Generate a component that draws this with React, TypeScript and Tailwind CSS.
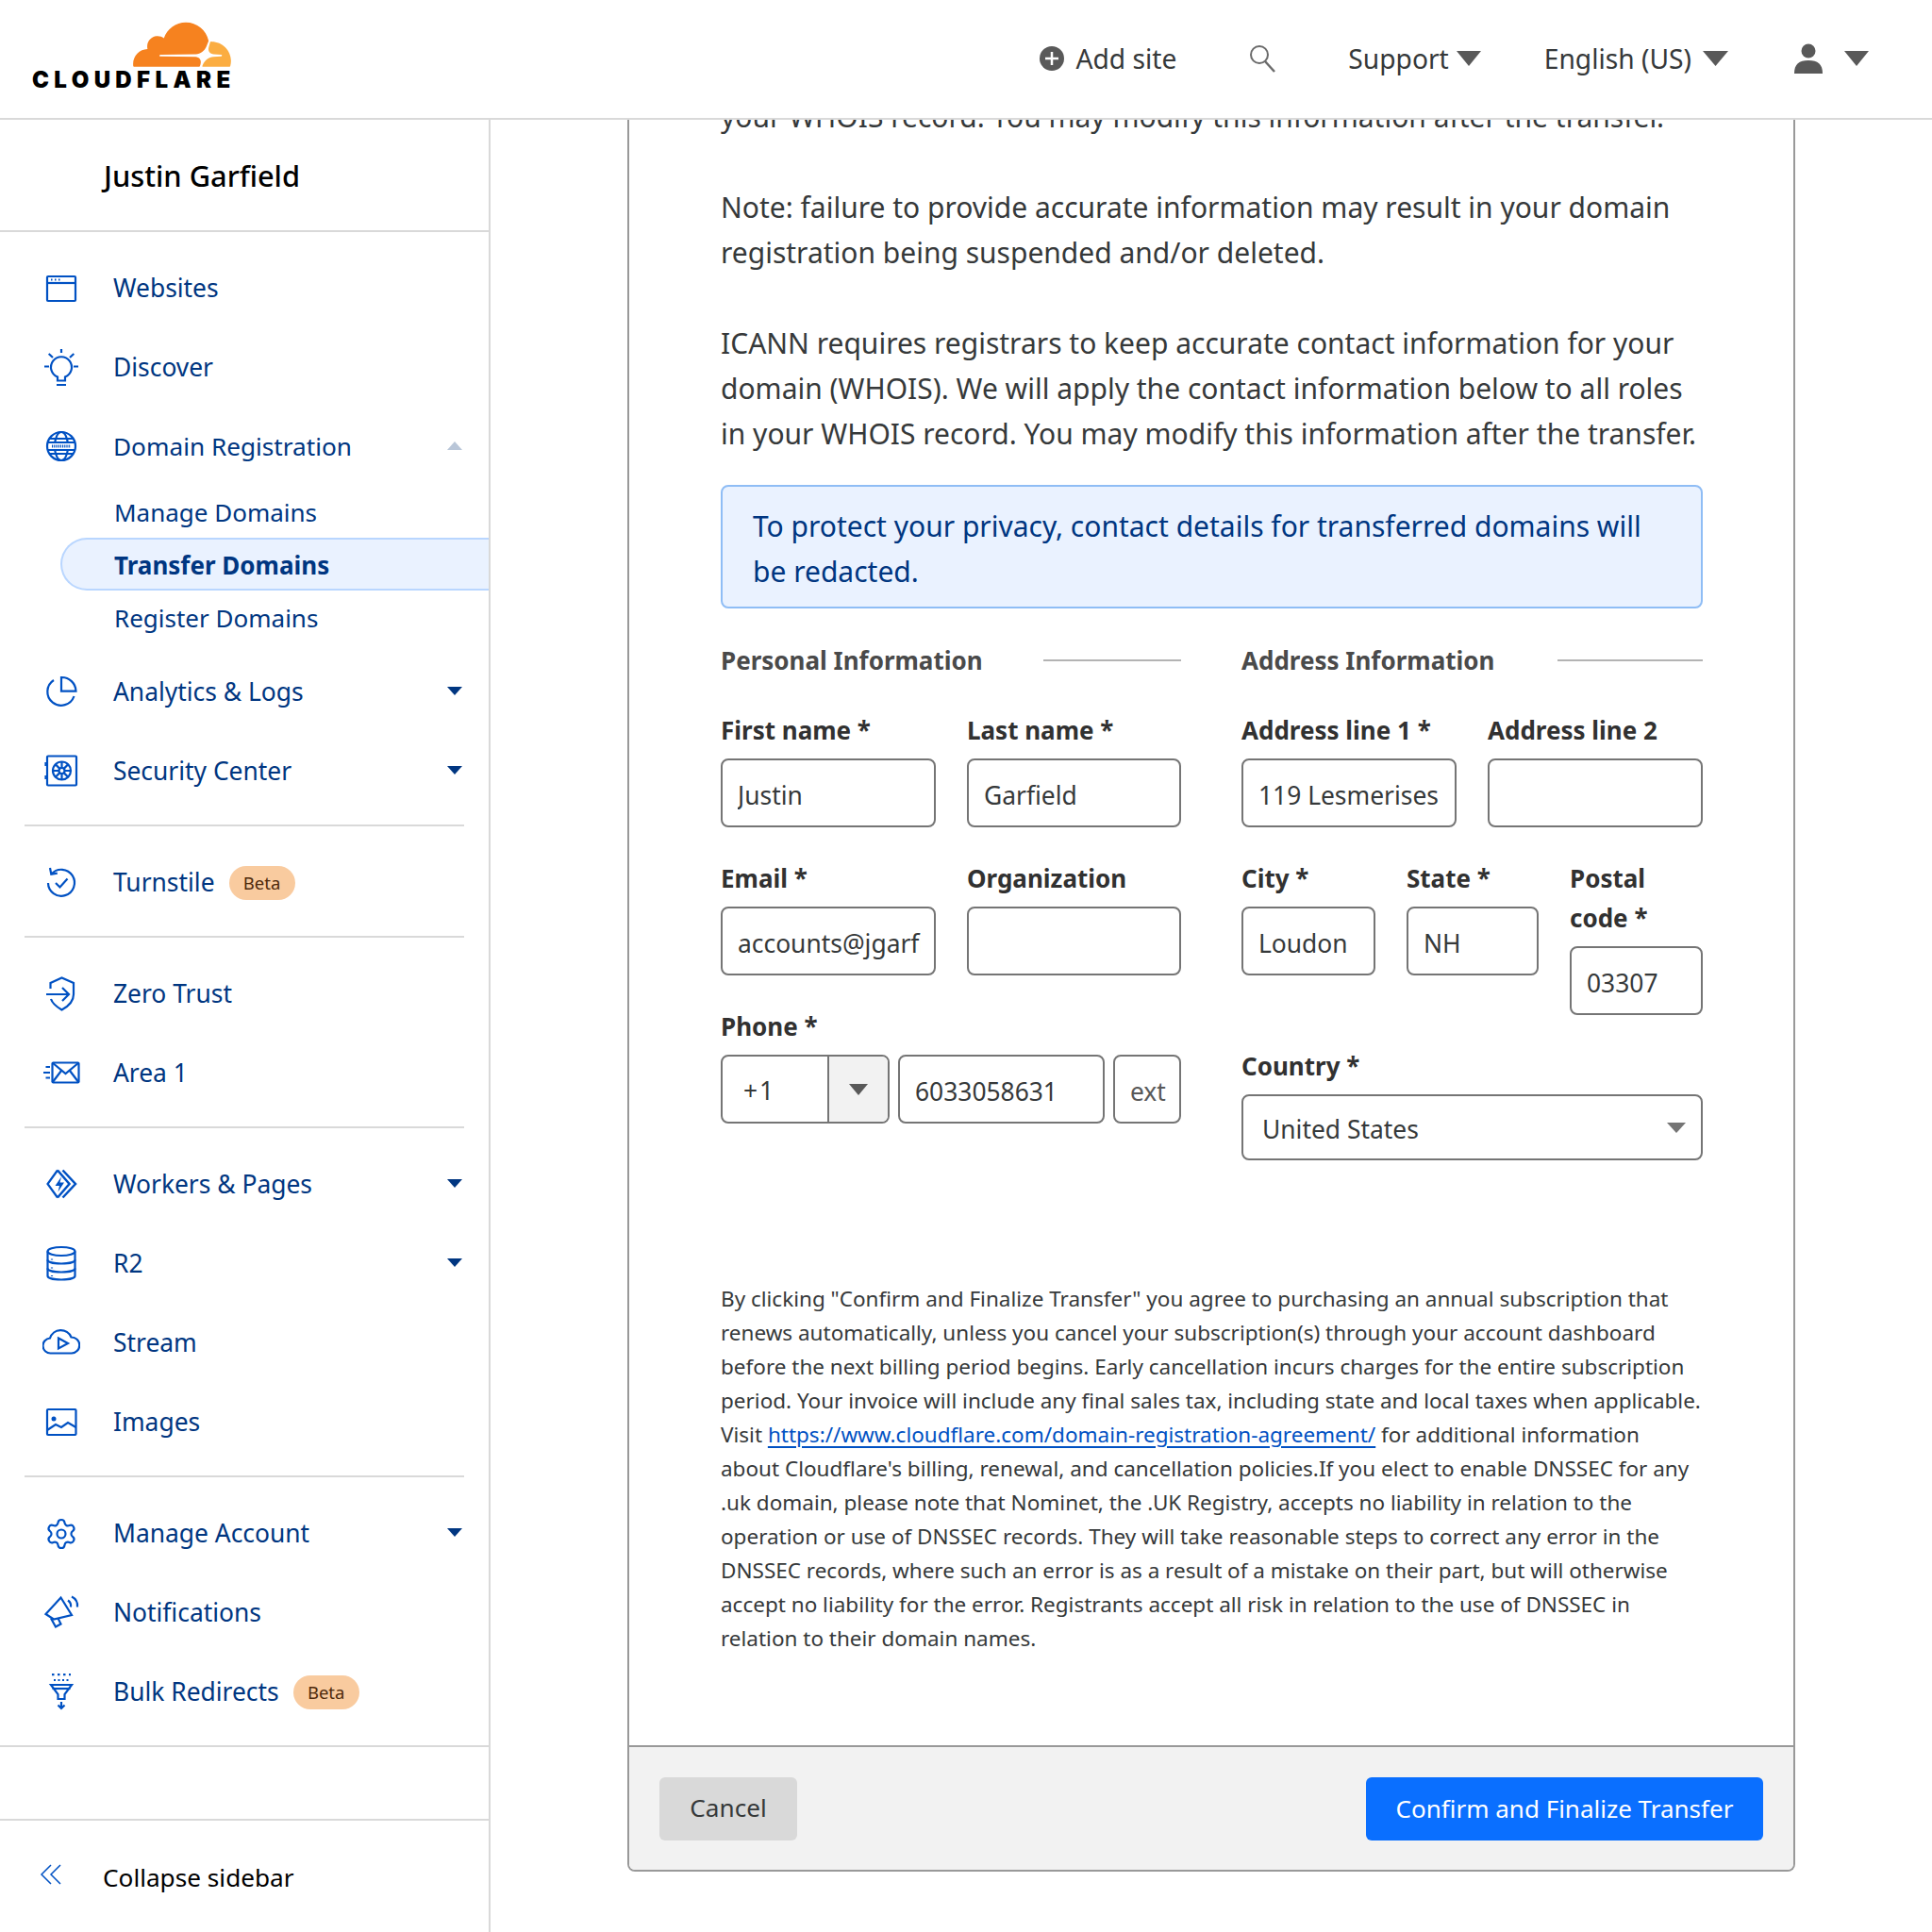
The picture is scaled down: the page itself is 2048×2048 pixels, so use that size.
import { ReactNode } from 'react';
import { Settings } from 'lucide-react';

// Sidebar icons, drawn in a 40x40 box
const Ico = ({ children }: { children: ReactNode }) => (
  <svg viewBox="0 0 40 40" fill="none" stroke="#0051c3" strokeWidth={2.2} className="w-10 h-10 shrink-0">
    {children}
  </svg>
);

const icons: Record<string, ReactNode> = {
  websites: (
    <Ico>
      <rect x="5" y="7" width="30" height="26" rx="1" />
      <path d="M5 14h30" />
      <path d="M9 10.5h1.5M13 10.5h1.5M17 10.5h1.5" />
    </Ico>
  ),
  discover: (
    <Ico>
      <path d="M16 33.5v-4a11 11 0 1 1 8 0v4z" />
      <path d="M15 38h10M20 0v4M6.7 5l4.3 4M33.3 5L29 9M2 18.5h5M33 18.5h5" />
    </Ico>
  ),
  domain: (
    <Ico>
      <circle cx="20" cy="19" r="15" />
      <ellipse cx="20" cy="19" rx="7" ry="15" />
      <path d="M7 11h26M7 27h26M5 15h30M5 23h30" />
      <rect x="9" y="16" width="22" height="6" fill="#fff" stroke="none" />
      <path d="M10 19h20" strokeWidth={3} strokeDasharray="1.2 1" />
    </Ico>
  ),
  analytics: (
    <Ico>
      <path d="M12 7A14.5 14.5 0 1 0 33.5 24" />
      <path d="M20 4a15 15 0 0 1 15.5 14.7H20z" />
    </Ico>
  ),
  security: (
    <Ico>
      <rect x="5" y="3.5" width="31" height="31" rx="1" />
      <path d="M3.5 10v4M3.5 24v4" />
      <circle cx="20.5" cy="19" r="9.5" />
      <circle cx="20.5" cy="19" r="3" />
      <path d="M20.5 9.5V16M20.5 22v6.5M11 19h6.5M23.5 19H30M13.8 12.3l4.6 4.6M22.6 21.1l4.6 4.6M27.2 12.3l-4.6 4.6M18.4 21.1l-4.6 4.6" />
    </Ico>
  ),
  turnstile: (
    <Ico>
      <path d="M9.5 10.5A14 14 0 1 1 6 20" />
      <path d="M8 4l1.3 6.8 6.5-1.2" />
      <path d="M14 20l4.5 4.5 8-9" />
    </Ico>
  ),
  zero: (
    <Ico>
      <path d="M8.5 14V8l12-5.5L33 8v12c0 8-6 13-12.5 16.500C14.500 33 10.500 29.500 9 25" />
      <path d="M4 20h24M21 13l7 7-7 7" />
    </Ico>
  ),
  area: (
    <Ico>
      <rect x="10.500" y="8.500" width="28" height="21" rx="1" />
      <path d="M10.500 8.500l14 11.500 14-11.500M10.500 29.500L20 17M38.500 29.500L29 17" />
      <path d="M3.500 13H8M1 19h7M3.500 24.500H8" />
    </Ico>
  ),
  workers: (
    <Ico>
      <path d="M16 4.500L5.500 19 16 33.500" />
      <path d="M16 4.500L28.500 19 16 33.500M21.500 4.500L35 19 21.500 33.500" strokeWidth={2.500} />
      <path d="M20 11.500L13.500 21h4.500l-1.500 6.500L23 17.500h-4.500z" fill="#0051c3" stroke="none" />
    </Ico>
  ),
  r2: (
    <Ico>
      <ellipse cx="20" cy="6.500" rx="14.500" ry="4.500" />
      <path d="M5.500 6.500v26c0 2.500 6.500 4 14.500 4s14.500-1.500 14.500-4v-26" />
      <path d="M5.500 15.500c0 2.500 6.500 4 14.500 4s14.500-1.500 14.500-4M5.500 24.500c0 2.500 6.500 4 14.500 4s14.500-1.500 14.500-4" />
      <path d="M10 14.500v1M10 23.500v1M10 32v1" />
    </Ico>
  ),
  stream: (
    <Ico>
      <path d="M9 30.500a8 8 0 0 1-1-16 12 12 0 0 1 22.500-1A8.500 8.500 0 0 1 31 30.500z" />
      <path d="M17 14.500L27 20l-10 5.500z" />
    </Ico>
  ),
  images: (
    <Ico>
      <rect x="5" y="6" width="30.500" height="27" rx="1" />
      <circle cx="12" cy="16" r="2.500" fill="#0051c3" stroke="none" />
      <path d="M5 28l9-6 6 3 7-5 8.500 5" />
    </Ico>
  ),
  account: (
    <span className="w-10 h-10 shrink-0 flex items-center justify-center">
      <Settings size={36} color="#0051c3" strokeWidth={1.45} />
    </span>
  ),
  notifications: (
    <Ico>
      <path d="M19.500 3.500L31 22l-19 4.500L3.500 21z" />
      <path d="M9 25.500l5 9 5.500-3-3-6" />
      <path d="M27 6.500a7 7 0 0 1 3 7M31 2.500a11 11 0 0 1 6 11" />
    </Ico>
  ),
  bulk: (
    <Ico>
      <path d="M9 12h22l-7.500 10v5h-7v-5z" />
      <path d="M10.500 16h19" />
      <path d="M20 30v7M16.500 33.500L20 37l3.500-3.500" />
      <path d="M10 1h20" strokeWidth={2.500} strokeDasharray="2.500 3.500" />
      <path d="M12 7h16" strokeWidth={2} strokeDasharray="2 2.500" />
    </Ico>
  ),
};

function Caret({ up, light }: { up?: boolean; light?: boolean }) {
  return (
    <svg viewBox="0 0 16 9" className="block w-4 h-[9px] -mt-1">
      <path d={up ? 'M0 9L8 0l8 9z' : 'M0 0h16L8 9z'} fill={light ? '#b9c6d8' : '#003681'} />
    </svg>
  );
}

function HeadCaret({ wide }: { wide?: boolean }) {
  return (
    <svg viewBox="0 0 26 16" preserveAspectRatio="none" className={`block h-4 ${wide ? 'w-[27px]' : 'w-[26px]'}`}>
      <path d="M0 0h26L13 16z" fill="#595959" />
    </svg>
  );
}

function Beta() {
  return (
    <span className="ml-[15px] w-[70px] h-9 rounded-full bg-[#f9cb9f] text-[#4f2a0c] text-[18.500px] flex items-center justify-center">
      Beta
    </span>
  );
}

function NavRow({ icon, label, caret, beta }: { icon: string; label: string; caret?: boolean; beta?: boolean }) {
  return (
    <div className="h-[84px] pt-1 flex items-center pl-[45px] pr-7 text-[#003681] text-[26.400px]">
      {icons[icon]}
      <span className="ml-[35px] whitespace-nowrap">{label}</span>
      {beta && <Beta />}
      {caret && (
        <span className="ml-auto">
          <Caret />
        </span>
      )}
    </div>
  );
}

function Divider() {
  return <div className="ml-[26px] mr-[26px] h-0.5 bg-[#d9d9d9] my-4" />;
}

function Sidebar() {
  return (
    <aside className="w-[520px] shrink-0 border-r-2 border-[#d9d9d9] flex flex-col">
      <div className="h-[119px] pt-0.5 shrink-0 border-b-2 border-[#d9d9d9] pl-[110px] flex items-center text-[30.800px] font-medium text-black">
        Justin Garfield
      </div>
      <nav className="pt-4">
        <NavRow icon="websites" label="Websites" />
        <NavRow icon="discover" label="Discover" />
        <div className="h-[84px] pt-1 flex items-center pl-[45px] pr-7 text-[#003681] text-[26.200px]">
          {icons.domain}
          <span className="ml-[35px]">Domain Registration</span>
          <span className="ml-auto">
            <Caret up light />
          </span>
        </div>
        <div className="pb-2 text-[26px] text-[#003681]">
          <div className="h-14 pt-0.5 pl-[121px] flex items-center">Manage Domains</div>
          <div className="h-14 pt-0.5 ml-[64px] pl-[55px] flex items-center font-bold bg-[#eaf2ff] border-2 border-r-0 border-[#b9d6ff] rounded-l-full">
            Transfer Domains
          </div>
          <div className="h-14 pt-0.5 pl-[121px] flex items-center">Register Domains</div>
        </div>
        <NavRow icon="analytics" label="Analytics & Logs" caret />
        <NavRow icon="security" label="Security Center" caret />
        <Divider />
        <NavRow icon="turnstile" label="Turnstile" beta />
        <Divider />
        <NavRow icon="zero" label="Zero Trust" />
        <NavRow icon="area" label="Area 1" />
        <Divider />
        <NavRow icon="workers" label="Workers & Pages" caret />
        <NavRow icon="r2" label="R2" caret />
        <NavRow icon="stream" label="Stream" />
        <NavRow icon="images" label="Images" />
        <Divider />
        <NavRow icon="account" label="Manage Account" caret />
        <NavRow icon="notifications" label="Notifications" />
        <NavRow icon="bulk" label="Bulk Redirects" beta />
      </nav>
      <div className="mt-4 h-[80px] shrink-0 border-y-2 border-[#d9d9d9]" />
      <div className="flex-1 flex items-center pt-1 pl-[42px] text-[26.200px] text-black">
        <svg viewBox="0 0 24 24" fill="none" stroke="#0051c3" strokeWidth={1.500} className="w-6 h-6 shrink-0 -mt-1.5">
          <path d="M12 1L2 11l10 10M22 1L12 11l10 10" />
        </svg>
        <span className="ml-[43px]">Collapse sidebar</span>
      </div>
    </aside>
  );
}

function Header() {
  return (
    <header className="h-[127px] shrink-0 border-b-2 border-[#d9d9d9] flex items-center justify-between pl-[34px] pr-[67px]">
      <div className="flex flex-col items-end -mt-[3px]">
        <svg viewBox="0 6.400 24 11.100" className="w-[104px] h-[48px]">
          <path
            fill="#f6821f"
            d="M16.5088 16.8447c.1475-.5068.0908-.9707-.1553-1.3154-.2246-.3164-.6045-.499-1.0615-.5205l-8.6592-.1123a.1559.1559 0 0 1-.1333-.0713c-.0283-.042-.0351-.0986-.021-.1553.0278-.084.1123-.1484.2036-.1562l8.7359-.1123c1.0351-.0489 2.1601-.8868 2.5537-1.9136l.499-1.3013c.0215-.0561.0293-.1128.0147-.168-.5625-2.5463-2.835-4.4453-5.5499-4.4453-2.5039 0-4.6284 1.6177-5.3876 3.8614-.4927-.3658-1.1187-.5625-1.794-.499-1.2026.119-2.1665 1.083-2.2861 2.2856-.0283.31-.0069.6128.0635.894C1.5683 13.171 0 14.7754 0 16.752c0 .1748.0142.3515.0352.5273.0141.083.0844.1475.1689.1475h15.9814c.0909 0 .1758-.0645.2032-.1553l.12-.4268z"
          />
          <path
            fill="#fbad41"
            d="M19.2656 11.2813c-.0771 0-.1611 0-.2383.0112-.0566 0-.1054.0415-.127.0976l-.3378 1.1744c-.1475.5068-.0918.9707.1543 1.3164.2256.3164.6055.498 1.0625.5195l1.8437.1133c.0557 0 .1055.0263.1329.0703.0283.043.0351.1074.0214.1562-.0283.084-.1132.1485-.204.1553l-1.921.1123c-1.041.0488-2.1582.8867-2.5527 1.914l-.1406.3585c-.0283.0713.0215.1416.0986.1416h6.5977c.0771 0 .1474-.0489.169-.126.1122-.4082.1757-.837.1757-1.2803 0-2.6025-2.125-4.727-4.7344-4.727"
          />
        </svg>
        <span className="text-[24px] leading-[28px] font-black tracking-[5.400px] -mr-[5px] text-black [font-family:Inter,sans-serif]">
          CLOUDFLARE
        </span>
      </div>
      <div className="flex items-center pb-px text-[28.200px] text-[#36393a] whitespace-nowrap">
        <svg viewBox="0 0 26 26" className="w-[26px] h-[26px] mr-[12px]">
          <circle cx="13" cy="13" r="13" fill="#595959" />
          <path d="M13 6v14M6 13h14" stroke="#fff" strokeWidth={2.500} />
        </svg>
        <span>Add site</span>
        <svg viewBox="0 0 32 32" fill="none" stroke="#6b6b6b" strokeWidth={2} className="w-8 h-8 ml-[75px]">
          <circle cx="13" cy="12" r="9" />
          <path d="M19 19l10 11" strokeWidth={2.500} />
        </svg>
        <span className="ml-[75px]">Support</span>
        <span className="ml-[8px]">
          <HeadCaret />
        </span>
        <span className="ml-[67px]">English (US)</span>
        <span className="ml-[12px]">
          <HeadCaret wide />
        </span>
        <svg viewBox="0 0 32 32" className="w-8 h-8 ml-[69px]">
          <circle cx="16" cy="8" r="7.500" fill="#595959" />
          <path d="M1 32c0-10 5-14 15-14s15 4 15 14z" fill="#595959" />
        </svg>
        <span className="ml-[22px]">
          <HeadCaret />
        </span>
      </div>
    </header>
  );
}

const inputCls =
  'block w-full h-[73px] pl-4 pr-[14px] pt-1 border-2 border-[#757575] rounded-lg text-[26.400px] text-[#36393a] bg-white outline-none';
const labelCls = 'block py-[3px] text-[26px] leading-[42px] font-bold text-[#313131]';

function Field({ label, value, className }: { label: string; value?: string; className?: string }) {
  return (
    <div className={className}>
      <label className={labelCls}>{label}</label>
      <input readOnly defaultValue={value} aria-label={label} className={`${inputCls} mt-1.5`} />
    </div>
  );
}

function SectionTitle({ title, lineWidth }: { title: string; lineWidth: string }) {
  return (
    <div className="flex items-center justify-between h-12 mb-[26px]">
      <span className="text-[26px] font-bold text-[#4a4a4a]">{title}</span>
      <span className={`h-0.5 bg-[#b3b3b3] ${lineWidth}`} />
    </div>
  );
}

function Form() {
  return (
    <div className="grid grid-cols-[488px_489px] gap-x-[64px] mt-[31px]">
      <div>
        <SectionTitle title="Personal Information" lineWidth="w-[146px]" />
        <div className="grid grid-cols-[228px_227px] gap-x-[33px] gap-y-[30px]">
          <Field label="First name *" value="Justin" />
          <Field label="Last name *" value="Garfield" />
          <Field label="Email *" value="accounts@jgarfield.com" />
          <Field label="Organization" />
        </div>
        <div className="mt-[30px]">
          <label className={labelCls}>Phone *</label>
          <div className="mt-1.5 flex gap-[9px]">
            <div className="w-[179px] h-[73px] border-2 border-[#757575] rounded-lg flex overflow-hidden text-[26.400px] text-[#36393a]">
              <span className="w-[113px] pt-1 pl-[22px] flex items-center border-r-2 border-[#757575] tracking-[2px]">+1</span>
              <span className="flex-1 bg-[#f2f2f2] flex items-center justify-center">
                <svg viewBox="0 0 20 12" className="w-5 h-3">
                  <path d="M0 0h20L10 12z" fill="#595959" />
                </svg>
              </span>
            </div>
            <input readOnly defaultValue="6033058631" aria-label="Phone" className={`${inputCls} !w-[219px]`} />
            <input readOnly placeholder="ext" aria-label="ext" className={`${inputCls} !w-[72px] placeholder:text-[#595959]`} />
          </div>
        </div>
      </div>
      <div>
        <SectionTitle title="Address Information" lineWidth="w-[154px]" />
        <div className="grid grid-cols-[228px_228px] gap-x-[33px]">
          <Field label="Address line 1 *" value="119 Lesmerises" />
          <Field label="Address line 2" />
        </div>
        <div className="grid grid-cols-[142px_140px_141px] gap-x-[33px] mt-[30px]">
          <Field label="City *" value="Loudon" />
          <Field label="State *" value="NH" />
          <Field label="Postal code *" value="03307" />
        </div>
        <div className="mt-[30px]">
          <label className={labelCls}>Country *</label>
          <div className="mt-1.5 h-[70px] pt-1.5 border-2 border-[#757575] rounded-lg flex items-center justify-between pl-5 pr-[16px] text-[26.400px] text-[#36393a]">
            United States
            <svg viewBox="0 0 20 11" className="block w-5 h-[11px] -mt-[5px]">
              <path d="M0 0h20L10 11z" fill="#757575" />
            </svg>
          </div>
        </div>
      </div>
    </div>
  );
}

function Panel() {
  return (
    <div className="ml-[145px] w-[1238px] -mt-[27px] border-x-2 border-b-2 border-[#999] rounded-b-lg overflow-hidden">
      <div className="pl-[97px] pr-[96px] pb-[95px]">
        <div className="text-[30px] leading-[48px] text-[#36393a] whitespace-nowrap">
          <p>your WHOIS record. You may modify this information after the transfer.</p>
          <p className="mt-12">
            Note: failure to provide accurate information may result in your domain
            <br />
            registration being suspended and/or deleted.
          </p>
          <p className="mt-12">
            ICANN requires registrars to keep accurate contact information for your
            <br />
            domain (WHOIS). We will apply the contact information below to all roles
            <br />
            in your WHOIS record. You may modify this information after the transfer.
          </p>
          <div className="mt-[30px] h-[131px] pt-1 border-2 border-[#8fbdf5] rounded-lg bg-[#eaf2ff] px-8 flex items-center text-[#003681]">
            <p>
              To protect your privacy, contact details for transferred domains will
              <br />
              be redacted.
            </p>
          </div>
        </div>
        <Form />
        <p className="mt-[129px] text-[22.500px] leading-[36px] text-[#36393a] whitespace-nowrap">
          By clicking "Confirm and Finalize Transfer" you agree to purchasing an annual subscription that
          <br />
          renews automatically, unless you cancel your subscription(s) through your account dashboard
          <br />
          before the next billing period begins. Early cancellation incurs charges for the entire subscription
          <br />
          period. Your invoice will include any final sales tax, including state and local taxes when applicable.
          <br />
          Visit{' '}
          <a className="text-[#0051c3] underline underline-offset-4" href="#">
            https://www.cloudflare.com/domain-registration-agreement/
          </a>{' '}
          for additional information
          <br />
          about Cloudflare's billing, renewal, and cancellation policies.If you elect to enable DNSSEC for any
          <br />
          .uk domain, please note that Nominet, the .UK Registry, accepts no liability in relation to the
          <br />
          operation or use of DNSSEC records. They will take reasonable steps to correct any error in the
          <br />
          DNSSEC records, where such an error is as a result of a mistake on their part, but will otherwise
          <br />
          accept no liability for the error. Registrants accept all risk in relation to the use of DNSSEC in
          <br />
          relation to their domain names.
        </p>
      </div>
      <div className="h-[132px] border-t-2 border-[#999] bg-[#f2f2f2] flex items-center justify-between px-8">
        <button className="w-[146px] h-[67px] rounded-md bg-[#d9d9d9] text-[26.200px] text-[#36393a]">Cancel</button>
        <button className="w-[421px] h-[67px] rounded-md bg-[#0a6fff] text-[26px] text-white">
          Confirm and Finalize Transfer
        </button>
      </div>
    </div>
  );
}

export default function App() {
  return (
    <div className="w-full h-screen flex flex-col overflow-hidden bg-white [font-family:'Noto_Sans',sans-serif]">
      <Header />
      <div className="flex flex-1 min-h-0">
        <Sidebar />
        <main className="flex-1 overflow-hidden">
          <Panel />
        </main>
      </div>
    </div>
  );
}
